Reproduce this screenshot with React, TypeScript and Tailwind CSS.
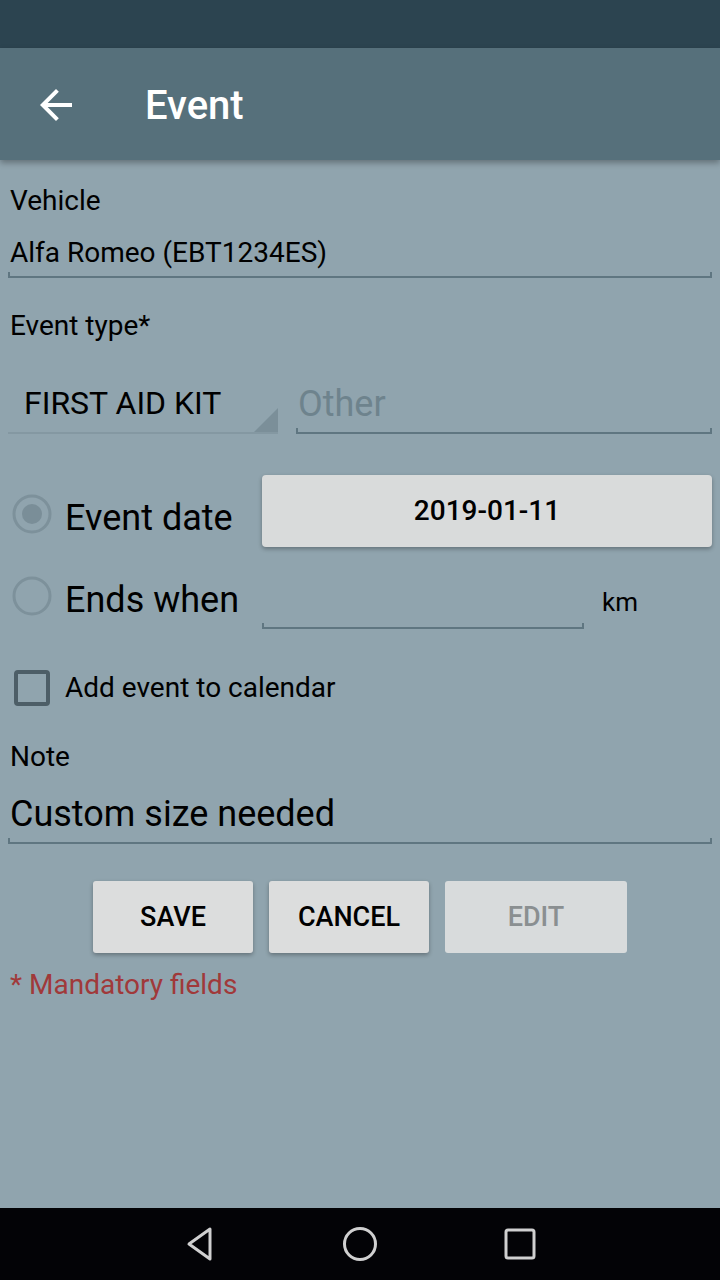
import React from "react";

function Underline({ className = "" }: { className?: string }) {
  return (
    <div className={"relative h-[6px] " + className}>
      <div className="absolute left-0 right-0 bottom-0 h-[2px] bg-[#5f7681]" />
      <div className="absolute left-0 bottom-0 w-[2px] h-[6px] bg-[#5f7681]" />
      <div className="absolute right-0 bottom-0 w-[2px] h-[6px] bg-[#5f7681]" />
    </div>
  );
}

function Radio({ checked, className = "" }: { checked?: boolean; className?: string }) {
  return (
    <svg width="42" height="42" viewBox="0 0 42 42" className={"shrink-0 " + className}>
      <circle cx="21" cy="21" r="18" fill="none" stroke="#7d919b" strokeWidth="3" />
      {checked && <circle cx="21" cy="21" r="10" fill="#7a8e98" />}
    </svg>
  );
}

export default function App() {
  return (
    <div
      className="w-[720px] h-[1280px] flex flex-col bg-[#90a4ae] text-black overflow-hidden"
      style={{ fontFamily: "Roboto, 'Noto Sans', sans-serif" }}
    >
      <div className="h-[48px] bg-[#2c4450] shrink-0" />
      <div className="h-[112px] bg-[#56707b] shrink-0 flex items-center shadow-[0_3px_6px_rgba(0,0,0,0.3)] relative z-10">
        <svg width="48" height="48" viewBox="0 0 24 24" className="ml-[32px] mt-[2px]">
          <path d="M20 11H7.83l5.59-5.59L12 4l-8 8 8 8 1.41-1.41L7.83 13H20v-2z" fill="#ffffff" />
        </svg>
        <div className="ml-[65px] mt-[4px] text-white text-[40px] font-medium leading-none">Event</div>
      </div>

      <div className="flex-1 flex flex-col px-[8px]">
        <div className="pl-[2px] mt-[25px] text-[28px] leading-[32px]">Vehicle</div>
        <div className="pl-[2px] mt-[20px] text-[28px] leading-[32px]">Alfa Romeo (EBT1234ES)</div>
        <Underline className="mt-[3px]" />

        <div className="pl-[2px] mt-[32px] text-[28px] leading-[32px]">Event type*</div>

        <div className="mt-[32px] flex items-end">
          <div className="w-[270px] flex flex-col">
            <div className="relative h-[58px] flex items-center pl-[16px] text-[32px]">
              FIRST AID KIT
              <svg width="24" height="24" viewBox="0 0 24 24" className="absolute right-0 bottom-0">
                <polygon points="24,0 24,24 0,24" fill="#7b8f99" />
              </svg>
            </div>
            <div className="h-[2px] bg-[#8498a2]" />
          </div>
          <div className="ml-[18px] flex-1 flex flex-col">
            <div className="h-[54px] flex items-center pl-[2px] pt-[6px] text-[36px] text-[#6e838d]">Other</div>
            <Underline className="mt-[0px]" />
          </div>
        </div>

        <div className="mt-[41px] flex items-center">
          <div className="w-[254px] flex items-center pl-[3px]">
            <Radio checked className="mt-[6px]" />
            <span className="ml-[12px] mt-[14px] text-[36px]">Event date</span>
          </div>
          <div className="flex-1 h-[72px] bg-[#d9dbdb] rounded-[4px] shadow-[0_2px_4px_rgba(0,0,0,0.3)] flex items-center justify-center text-[28px] font-medium">
            2019-01-11
          </div>
        </div>

        <div className="mt-[16px] flex items-end">
          <div className="w-[254px] flex items-center pl-[3px] pb-[2px]">
            <Radio />
            <span className="ml-[12px] mt-[8px] text-[36px]">Ends when</span>
          </div>
          <div className="w-[322px] flex flex-col">
            <div className="h-[60px]" />
            <Underline />
          </div>
          <div className="ml-[18px] pb-[7px] text-[26px]">km</div>
        </div>

        <div className="mt-[38px] flex items-center pl-[6px]">
          <div className="w-[36px] h-[36px] border-[4px] border-[#4d5e67] rounded-[4px]" />
          <span className="ml-[15px] text-[28px]">Add event to calendar</span>
        </div>

        <div className="pl-[2px] mt-[32px] text-[28px] leading-[32px]">Note</div>
        <div className="pl-[2px] mt-[21px] text-[36px] leading-[40px]">Custom size needed</div>
        <Underline className="mt-[4px]" />

        <div className="mt-[37px] flex pl-[85px] gap-[16px]">
          <div className="w-[160px] h-[72px] bg-[#dcdddd] rounded-[3px] shadow-[0_2px_4px_rgba(0,0,0,0.3)] flex items-center justify-center text-[27px] font-medium">SAVE</div>
          <div className="w-[160px] h-[72px] bg-[#dcdddd] rounded-[3px] shadow-[0_2px_4px_rgba(0,0,0,0.3)] flex items-center justify-center text-[27px] font-medium">CANCEL</div>
          <div className="w-[182px] h-[72px] bg-[#d8dbdc] rounded-[3px] flex items-center justify-center text-[27px] font-medium text-[#8a8f91]">EDIT</div>
        </div>

        <div className="pl-[2px] mt-[16px] text-[28px] leading-[32px] text-[#a0393a]">* Mandatory fields</div>
      </div>

      <div className="h-[72px] bg-[#030306] shrink-0 flex items-center justify-center gap-[0px]">
        <div className="w-[160px] flex justify-center">
          <svg width="34" height="36" viewBox="0 0 34 36">
            <path d="M27 3 L27 33 L6 18 Z" fill="none" stroke="#d0d0d0" strokeWidth="3" strokeLinejoin="round" />
          </svg>
        </div>
        <div className="w-[160px] flex justify-center">
          <svg width="36" height="36" viewBox="0 0 36 36">
            <circle cx="18" cy="18" r="15.5" fill="none" stroke="#d0d0d0" strokeWidth="3" />
          </svg>
        </div>
        <div className="w-[160px] flex justify-center">
          <svg width="34" height="34" viewBox="0 0 34 34">
            <rect x="3" y="3" width="28" height="28" rx="2" fill="none" stroke="#d0d0d0" strokeWidth="3" />
          </svg>
        </div>
      </div>
    </div>
  );
}
